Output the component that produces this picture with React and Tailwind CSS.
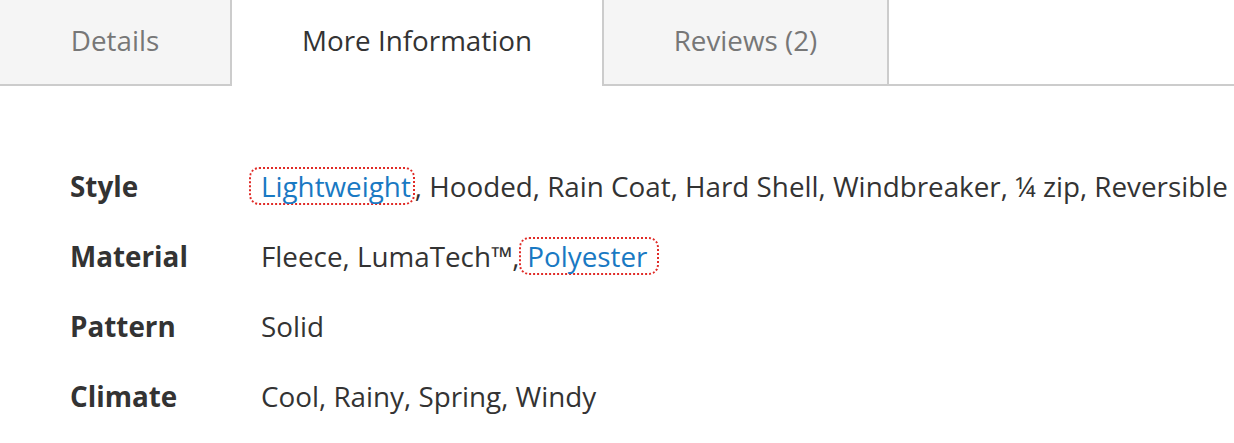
import React from 'react';

const ROWS = [
  { label: 'Style', key: 'style' },
  { label: 'Material', key: 'material' },
  { label: 'Pattern', key: 'pattern' },
  { label: 'Climate', key: 'climate' },
];

function Value({ k }) {
  if (k === 'style') {
    return (
      <>
        <a href="#" className="inline-block leading-[34px] -ml-[12px] pl-[10px] pr-[2px] border-2 border-dotted border-[#e02b27] rounded-[10px] text-[#1979c3] no-underline">
          Lightweight
        </a>
        , Hooded, Rain Coat, Hard Shell, Windbreaker, ¼ zip, Reversible
      </>
    );
  }
  if (k === 'material') {
    return (
      <>
        Fleece, LumaTech™,
        <a href="#" className="inline-block leading-[34px] pl-[6px] pr-[10px] border-2 border-dotted border-[#e02b27] rounded-[10px] text-[#1979c3] no-underline">
          Polyester
        </a>
      </>
    );
  }
  if (k === 'pattern') return <>Solid</>;
  return <>Cool, Rainy, Spring, Windy</>;
}

export default function App() {
  const tabs = [
    { name: 'Details', w: 'w-[232px]', active: false, cls: 'border-r-2' },
    { name: 'More Information', w: 'w-[370px]', active: true, cls: '' },
    { name: 'Reviews (2)', w: 'w-[287px]', active: false, cls: 'border-x-2' },
  ];

  return (
    <div className="w-[1234px] h-[443px] bg-white overflow-hidden text-[#333]" style={{ fontFamily: '"Open Sans", "Noto Sans", sans-serif' }}>
      {/* tab strip */}
      <div className="flex border-b-2 border-[#cccccc]">
        {tabs.map(t => (
          <div
            key={t.name}
            className={
              t.active
                ? `${t.w} h-[86px] -mb-[2px] pb-[4px] bg-white flex items-center justify-center text-[27.8px] text-[#333]`
                : `${t.w} h-[84px] pb-[2px] bg-[#f5f5f5] border-[#cccccc] ${t.cls} flex items-center justify-center text-[27.8px] text-[#777]`
            }
          >
            {t.name}
          </div>
        ))}
      </div>

      {/* additional attributes */}
      <div className="mt-[65px]">
        {ROWS.map(r => (
          <div key={r.key} className="flex items-center h-[70px] text-[27.8px] leading-[38px]">
            <div className="w-[261px] pl-[70px] font-bold">{r.label}</div>
            <div className="flex-1 whitespace-nowrap">
              <Value k={r.key} />
            </div>
          </div>
        ))}
      </div>
    </div>
  );
}
